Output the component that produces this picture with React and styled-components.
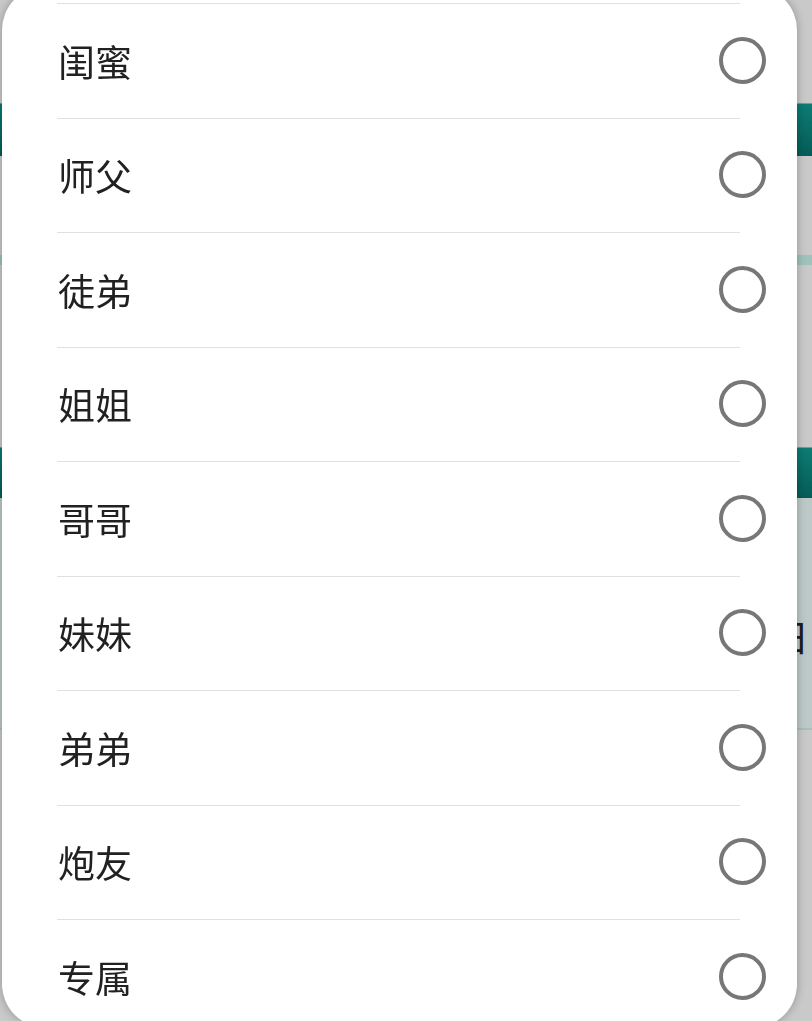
import React from "react";
import styled, { createGlobalStyle } from "styled-components";

const GlobalStyle = createGlobalStyle`
  html, body {
    margin: 0;
    padding: 0;
    overflow: hidden;
    background: #c9c9c9;
    font-family: "Noto Sans CJK SC", "Noto Sans", sans-serif;
  }
`;

const Backdrop = styled.div`
  display: flex;
  flex-direction: column;
  width: 812px;
  height: 1021px;
  background: #c9c9c9;
`;

const Space = styled.div`
  height: ${(p) => p.$h}px;
  flex-shrink: 0;
`;

const TealBar = styled.div`
  height: ${(p) => p.$h}px;
  flex-shrink: 0;
  background: linear-gradient(#0c7c74, #055c57);
  border-top: 1px solid #5aa69e;
  box-sizing: border-box;
`;

const LightStrip = styled.div`
  height: 10px;
  flex-shrink: 0;
  background: #9fc2bc;
`;

const Panel = styled.div`
  height: 232px;
  flex-shrink: 0;
  background: #bdc9c8;
  border-bottom: 2px solid #a9bfbb;
  display: flex;
  justify-content: flex-end;
  align-items: flex-start;
  padding: 120px 3px 0 0;
  box-sizing: border-box;
  font-size: 37px;
  line-height: 1;
  color: #1d1d1d;
`;

const Dialog = styled.div`
  position: fixed;
  left: 2px;
  top: -14px;
  width: 795px;
  height: 1042px;
  background: #ffffff;
  border-radius: 44px;
  box-shadow: 0 0 10px rgba(0, 0, 0, 0.28);
  overflow: hidden;
`;

const List = styled.div`
  display: flex;
  flex-direction: column;
  padding-top: 17px;
`;

const Row = styled.div`
  position: relative;
  height: 114.5px;
  flex-shrink: 0;
  display: flex;
  align-items: center;
  justify-content: space-between;
  padding: 0 31px 0 56px;
  box-sizing: border-box;

  &::before {
    content: "";
    position: absolute;
    top: 0;
    left: 55px;
    right: 57px;
    height: 1px;
    background: #e0e0e0;
  }
`;

const Label = styled.span`
  font-size: 37px;
  line-height: 1;
  color: #212121;
  padding-top: 2px;
`;

const Radio = styled.span`
  width: 47px;
  height: 47px;
  border-radius: 50%;
  border: 4px solid #777777;
  box-sizing: border-box;
  flex-shrink: 0;
`;

const items = ["闺蜜", "师父", "徒弟", "姐姐", "哥哥", "妹妹", "弟弟", "炮友", "专属"];

export default function App() {
  return (
    <>
      <GlobalStyle />
      <Backdrop>
        <Space $h={103} />
        <TealBar $h={53} />
        <Space $h={99} />
        <LightStrip />
        <Space $h={182} />
        <TealBar $h={51} />
        <Panel>日</Panel>
      </Backdrop>
      <Dialog>
        <List>
          {items.map((t) => (
            <Row key={t}>
              <Label>{t}</Label>
              <Radio />
            </Row>
          ))}
        </List>
      </Dialog>
    </>
  );
}
